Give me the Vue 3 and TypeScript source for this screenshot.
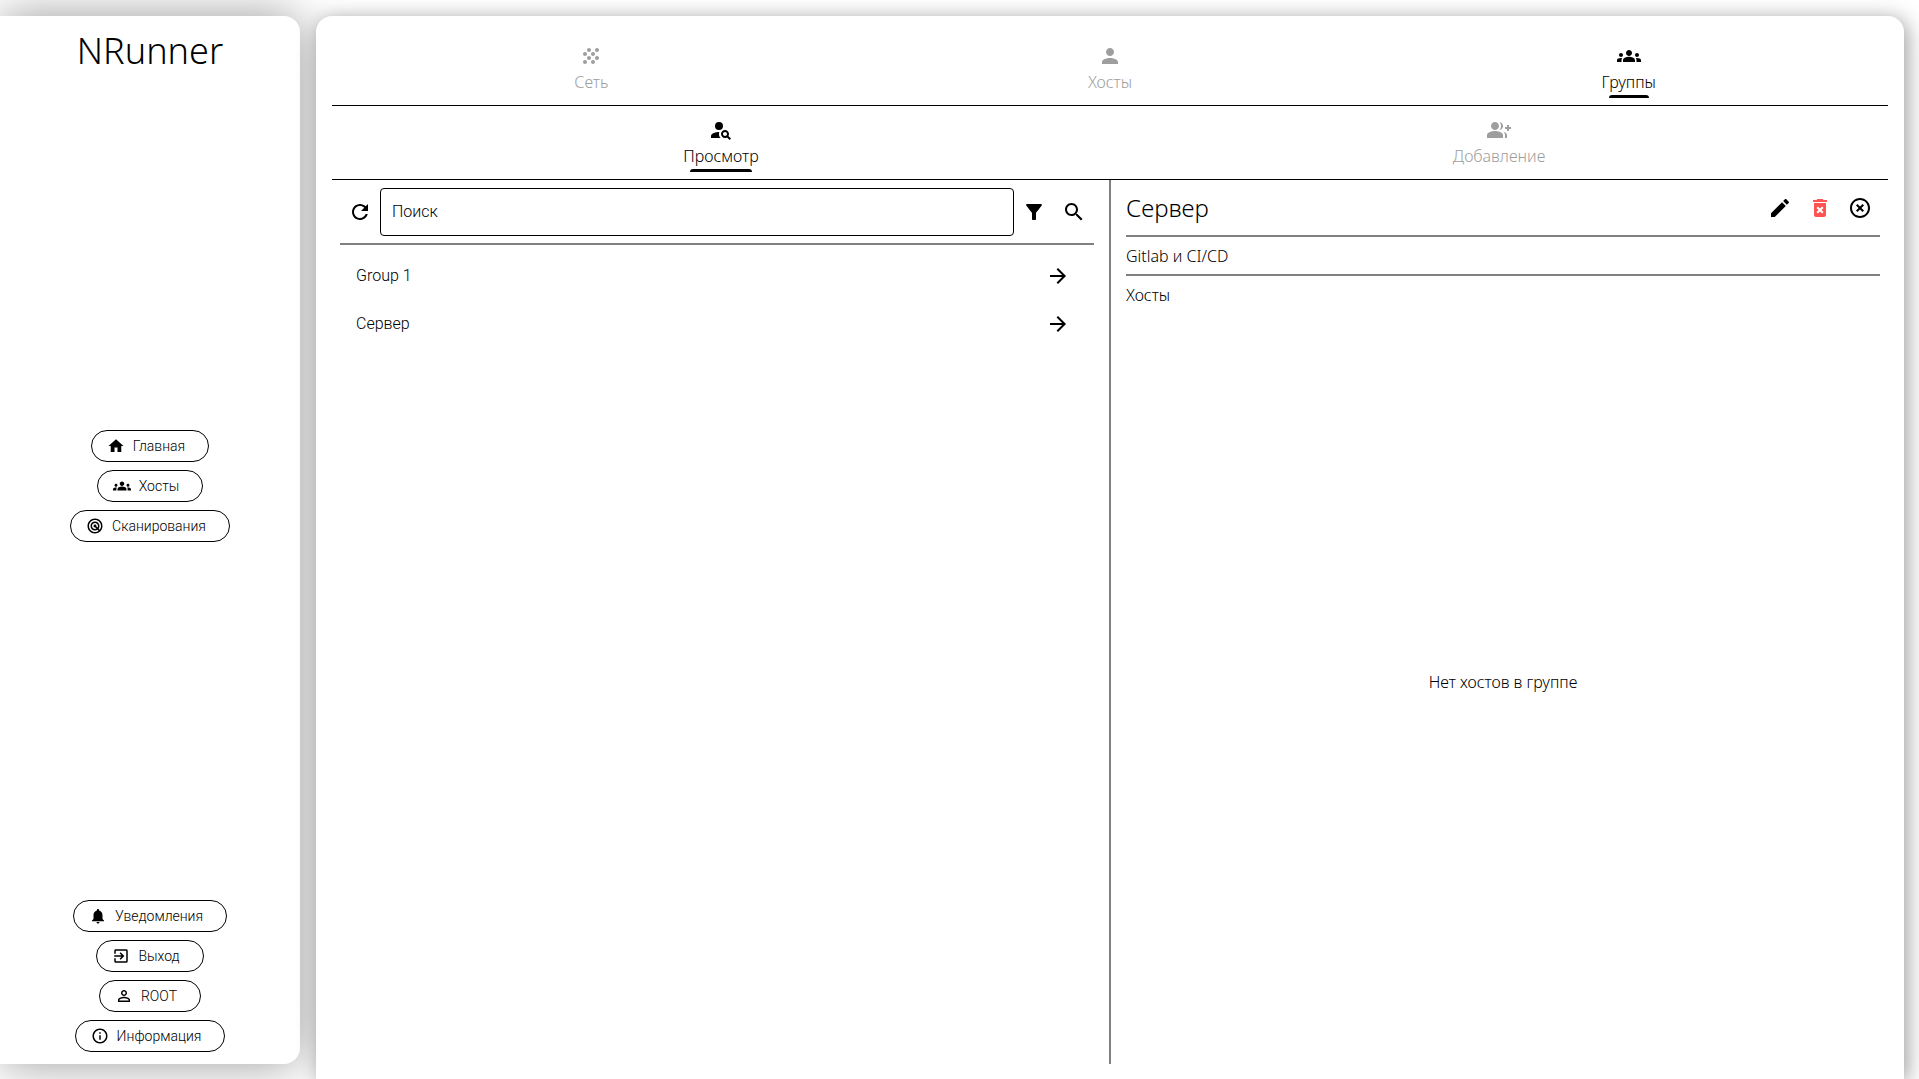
<script setup lang="ts">
import { computed, ref } from 'vue'

interface Item {
  id: string
  label: string
  icon: string
}

interface Group {
  name: string
  description: string
  hosts: string[]
}

const icons: Record<string, string> = {
  home: 'M10 20v-6h4v6h5v-8h3L12 3 2 12h3v8z',
  groups:
    'M12 12.75c1.63 0 3.07.39 4.24.9 1.08.48 1.76 1.56 1.76 2.73V18H6v-1.61c0-1.18.68-2.26 1.76-2.73 1.17-.52 2.61-.91 4.24-.91zM4 13c1.1 0 2-.9 2-2s-.9-2-2-2-2 .9-2 2 .9 2 2 2zm1.13 1.1c-.37-.06-.74-.1-1.13-.1-.99 0-1.93.21-2.78.58C.48 14.9 0 15.62 0 16.43V18h4.5v-1.61c0-.83.23-1.61.63-2.29zM20 13c1.1 0 2-.9 2-2s-.9-2-2-2-2 .9-2 2 .9 2 2 2zm4 3.43c0-.81-.48-1.53-1.22-1.85-.85-.37-1.79-.58-2.78-.58-.39 0-.76.04-1.13.1.4.68.63 1.46.63 2.29V18H24v-1.57zM12 6c1.66 0 3 1.34 3 3s-1.34 3-3 3-3-1.34-3-3 1.34-3 3-3z',
  radar:
    'M19.74 18.33C21.15 16.6 22 14.4 22 12c0-5.52-4.48-10-10-10S2 6.48 2 12s4.48 10 10 10c2.4 0 4.6-.85 6.33-2.26.27-.22.53-.46.78-.71.03-.03.05-.06.07-.08.2-.2.39-.41.56-.62zM12 20c-4.41 0-8-3.59-8-8s3.59-8 8-8 8 3.59 8 8c0 1.85-.63 3.54-1.69 4.9l-1.43-1.43c.69-.98 1.1-2.17 1.1-3.46 0-3.31-2.69-6-6-6s-6 2.69-6 6 2.69 6 6 6c1.3 0 2.51-.42 3.49-1.13l1.42 1.42C15.54 19.37 13.85 20 12 20zm1.92-7.49c.17-.66.02-1.38-.49-1.9l-.02-.02c-.77-.77-2-.78-2.78-.04-.01.01-.03.02-.05.04-.78.78-.78 2.05 0 2.83l.02.02c.52.51 1.25.67 1.91.49l1.51 1.51c-.6.36-1.29.58-2.04.58-2.21 0-4-1.79-4-4s1.79-4 4-4 4 1.79 4 4c0 .73-.21 1.41-.56 2l-1.5-1.51z',
  bell:
    'M12 22c1.1 0 2-.9 2-2h-4c0 1.1.89 2 2 2zm6-6v-5c0-3.07-1.64-5.64-4.5-6.32V4c0-.83-.67-1.5-1.5-1.5s-1.5.67-1.5 1.5v.68C7.63 5.36 6 7.92 6 11v5l-2 2v1h16v-1l-2-2z',
  exit:
    'M10.09 15.59L11.5 17l5-5-5-5-1.41 1.41L12.67 11H3v2h9.67l-2.58 2.59zM19 3H5c-1.11 0-2 .9-2 2v4h2V5h14v14H5v-4H3v4c0 1.1.89 2 2 2h14c1.1 0 2-.9 2-2V5c0-1.1-.9-2-2-2z',
  personOutline:
    'M12 5.9c1.16 0 2.1.94 2.1 2.1s-.94 2.1-2.1 2.1S9.9 9.16 9.9 8s.94-2.1 2.1-2.1m0 9c2.97 0 6.1 1.46 6.1 2.1v1.1H5.9V17c0-.64 3.13-2.1 6.1-2.1M12 4C9.79 4 8 5.79 8 8s1.79 4 4 4 4-1.79 4-4-1.79-4-4-4zm0 9c-2.67 0-8 1.34-8 4v3h16v-3c0-2.66-5.33-4-8-4z',
  info:
    'M11 7h2v2h-2zm0 4h2v6h-2zm1-9C6.48 2 2 6.48 2 12s4.48 10 10 10 10-4.48 10-10S17.52 2 12 2zm0 18c-4.41 0-8-3.59-8-8s3.59-8 8-8 8 3.59 8 8-3.59 8-8 8z',
  grain:
    'M10 12c-1.1 0-2 .9-2 2s.9 2 2 2 2-.9 2-2-.9-2-2-2zM6 8c-1.1 0-2 .9-2 2s.9 2 2 2 2-.9 2-2-.9-2-2-2zm0 8c-1.1 0-2 .9-2 2s.9 2 2 2 2-.9 2-2-.9-2-2-2zm12-8c1.1 0 2-.9 2-2s-.9-2-2-2-2 .9-2 2 .9 2 2 2zm-4 8c-1.1 0-2 .9-2 2s.9 2 2 2 2-.9 2-2-.9-2-2-2zm4-4c-1.1 0-2 .9-2 2s.9 2 2 2 2-.9 2-2-.9-2-2-2zm-4-4c-1.1 0-2 .9-2 2s.9 2 2 2 2-.9 2-2-.9-2-2-2zm-4-4c-1.1 0-2 .9-2 2s.9 2 2 2 2-.9 2-2-.9-2-2-2z',
  person:
    'M12 12c2.21 0 4-1.79 4-4s-1.79-4-4-4-4 1.79-4 4 1.79 4 4 4zm0 2c-2.67 0-8 1.34-8 4v2h16v-2c0-2.66-5.33-4-8-4z',
  personSearch:
    'M10 4a4 4 0 1 0 0 8 4 4 0 0 0 0-8zM10.35 14.01C7.62 13.91 2 15.27 2 18v2h9.54c-2.47-2.76-1.23-5.89-1.19-5.99zM19.43 18.02c.36-.59.57-1.28.57-2.02 0-2.21-1.79-4-4-4s-4 1.79-4 4 1.79 4 4 4c.74 0 1.43-.22 2.02-.57L20.59 22 22 20.59l-2.57-2.57zM16 18c-1.1 0-2-.9-2-2s.9-2 2-2 2 .9 2 2-.9 2-2 2z',
  groupAdd:
    'M22 9V7h-2v2h-2v2h2v2h2v-2h2V9zM8 12c2.21 0 4-1.79 4-4s-1.79-4-4-4-4 1.79-4 4 1.79 4 4 4zm0 1c-2.67 0-8 1.34-8 4v3h16v-3c0-2.66-5.33-4-8-4zM12.51 4.05C13.43 5.11 14 6.49 14 8s-.57 2.89-1.49 3.95C14.47 11.7 16 10.04 16 8s-1.53-3.7-3.49-3.95zM16.53 13.83C17.42 14.66 18 15.7 18 17v3h2v-3c0-1.45-1.59-2.51-3.47-3.17z',
  refresh:
    'M17.65 6.35C16.2 4.9 14.21 4 12 4c-4.42 0-7.99 3.58-7.99 8s3.57 8 7.99 8c3.73 0 6.84-2.55 7.73-6h-2.08c-.82 2.33-3.04 4-5.65 4-3.31 0-6-2.69-6-6s2.69-6 6-6c1.66 0 3.14.69 4.22 1.78L13 11h7V4l-2.35 2.35z',
  filter:
    'M4.25 5.61C6.27 8.2 10 13 10 13v6c0 .55.45 1 1 1h2c.55 0 1-.45 1-1v-6s3.72-4.8 5.74-7.39c.51-.66.04-1.61-.79-1.61H5.04c-.83 0-1.3.95-.79 1.61z',
  search:
    'M15.5 14h-.79l-.28-.27C15.41 12.59 16 11.11 16 9.5 16 5.91 13.09 3 9.5 3S3 5.91 3 9.5 5.91 16 9.5 16c1.61 0 3.09-.59 4.23-1.57l.27.28v.79l5 4.99L20.49 19l-4.99-5zm-6 0C7.01 14 5 11.99 5 9.5S7.01 5 9.5 5 14 7.01 14 9.5 11.99 14 9.5 14z',
  arrow: 'M12 4l-1.41 1.41L16.17 11H4v2h12.17l-5.58 5.59L12 20l8-8z',
  edit:
    'M3 17.25V21h3.75L17.81 9.94l-3.75-3.75L3 17.25zM20.71 7.04c.39-.39.39-1.02 0-1.41l-2.34-2.34c-.39-.39-1.02-.39-1.41 0l-1.83 1.83 3.75 3.75 1.83-1.83z',
  remove:
    'M6 19c0 1.1.9 2 2 2h8c1.1 0 2-.9 2-2V7H6v12zm2.46-7.12l1.41-1.41L12 12.59l2.12-2.12 1.41 1.41L13.41 14l2.12 2.12-1.41 1.41L12 15.41l-2.12 2.12-1.41-1.41L10.59 14l-2.13-2.12zM15.5 4l-1-1h-5l-1 1H5v2h14V4z',
  close:
    'M14.59 8L12 10.59 9.41 8 8 9.41 10.59 12 8 14.59 9.41 16 12 13.41 14.59 16 16 14.59 13.41 12 16 9.41 14.59 8zM12 2C6.47 2 2 6.47 2 12s4.47 10 10 10 10-4.47 10-10S17.53 2 12 2zm0 18c-4.41 0-8-3.59-8-8s3.59-8 8-8 8 3.59 8 8-3.59 8-8 8z',
}

const pages: Item[] = [
  { id: 'home', label: 'Главная', icon: 'home' },
  { id: 'hosts', label: 'Хосты', icon: 'groups' },
  { id: 'scans', label: 'Сканирования', icon: 'radar' },
]

const account: Item[] = [
  { id: 'notifications', label: 'Уведомления', icon: 'bell' },
  { id: 'logout', label: 'Выход', icon: 'exit' },
  { id: 'user', label: 'ROOT', icon: 'personOutline' },
  { id: 'about', label: 'Информация', icon: 'info' },
]

const sections: Item[] = [
  { id: 'network', label: 'Сеть', icon: 'grain' },
  { id: 'hosts', label: 'Хосты', icon: 'person' },
  { id: 'groups', label: 'Группы', icon: 'groups' },
]

const modes: Item[] = [
  { id: 'view', label: 'Просмотр', icon: 'personSearch' },
  { id: 'add', label: 'Добавление', icon: 'groupAdd' },
]

const groups: Group[] = [
  { name: 'Group 1', description: '', hosts: [] },
  { name: 'Сервер', description: 'Gitlab и CI/CD', hosts: [] },
]

const section = ref('groups')
const mode = ref('view')
const query = ref('')
const selected = ref<Group | null>(groups[1])

const visibleGroups = computed(() =>
  groups.filter((g) => g.name.toLowerCase().includes(query.value.toLowerCase())),
)
</script>

<template>
  <div class="app">
    <aside class="sidebar">
      <h1 class="brand">NRunner</h1>
      <nav class="menu">
        <button v-for="p in pages" :key="p.id" type="button" class="pill">
          <svg viewBox="0 0 24 24" aria-hidden="true"><path :d="icons[p.icon]" /></svg>
          <span>{{ p.label }}</span>
        </button>
      </nav>
      <div class="menu">
        <button v-for="a in account" :key="a.id" type="button" class="pill">
          <svg viewBox="0 0 24 24" aria-hidden="true"><path :d="icons[a.icon]" /></svg>
          <span>{{ a.label }}</span>
        </button>
      </div>
    </aside>

    <main class="card">
      <div class="tabs" role="tablist">
        <button
          v-for="s in sections"
          :key="s.id"
          type="button"
          role="tab"
          class="tab"
          :class="{ active: section === s.id }"
          :aria-selected="section === s.id"
          @click="section = s.id"
        >
          <svg viewBox="0 0 24 24" aria-hidden="true"><path :d="icons[s.icon]" /></svg>
          <span class="tab-label">{{ s.label }}</span>
        </button>
      </div>
      <div class="tabs" role="tablist">
        <button
          v-for="m in modes"
          :key="m.id"
          type="button"
          role="tab"
          class="tab"
          :class="{ active: mode === m.id }"
          :aria-selected="mode === m.id"
          @click="mode = m.id"
        >
          <svg viewBox="0 0 24 24" aria-hidden="true"><path :d="icons[m.icon]" /></svg>
          <span class="tab-label">{{ m.label }}</span>
        </button>
      </div>

      <div class="panes">
        <section class="pane">
          <div class="search">
            <button type="button" class="icon-button" aria-label="Обновить">
              <svg viewBox="0 0 24 24"><path :d="icons.refresh" /></svg>
            </button>
            <input v-model="query" class="search-input" type="text" placeholder="Поиск" aria-label="Поиск" />
            <button type="button" class="icon-button" aria-label="Фильтр">
              <svg viewBox="0 0 24 24"><path :d="icons.filter" /></svg>
            </button>
            <button type="button" class="icon-button" aria-label="Найти">
              <svg viewBox="0 0 24 24"><path :d="icons.search" /></svg>
            </button>
          </div>
          <hr class="rule" />
          <ul class="list">
            <li v-for="g in visibleGroups" :key="g.name">
              <button type="button" class="list-item" @click="selected = g">
                <span>{{ g.name }}</span>
                <svg viewBox="0 0 24 24" aria-hidden="true"><path :d="icons.arrow" /></svg>
              </button>
            </li>
          </ul>
        </section>

        <div class="divider"></div>

        <section v-if="selected" class="pane">
          <header class="detail-head">
            <h2 class="detail-title">{{ selected.name }}</h2>
            <button type="button" class="icon-button" aria-label="Изменить">
              <svg viewBox="0 0 24 24"><path :d="icons.edit" /></svg>
            </button>
            <button type="button" class="icon-button danger" aria-label="Удалить">
              <svg viewBox="0 0 24 24"><path :d="icons.remove" /></svg>
            </button>
            <button type="button" class="icon-button" aria-label="Закрыть" @click="selected = null">
              <svg viewBox="0 0 24 24"><path :d="icons.close" /></svg>
            </button>
          </header>
          <hr class="rule" />
          <p class="line">{{ selected.description }}</p>
          <hr class="rule" />
          <h3 class="line">Хосты</h3>
          <p v-if="!selected.hosts.length" class="empty">Нет хостов в группе</p>
        </section>
      </div>
    </main>
  </div>
</template>

<style>
body {
  margin: 0;
  background: #fff;
}
</style>

<style scoped>
.app {
  box-sizing: border-box;
  display: flex;
  gap: 16px;
  height: 100vh;
  padding: 16px 15px 0 0;
  overflow: hidden;
  color: #000;
  font-family: 'Noto Sans', 'Open Sans', sans-serif;
  font-size: 16px;
  font-weight: 350;
}

button {
  border: 0;
  padding: 0;
  background: none;
  color: inherit;
  font: inherit;
  cursor: pointer;
}

svg {
  display: block;
  flex: none;
  width: 24px;
  height: 24px;
  fill: currentColor;
}

h1,
h2,
h3,
p,
ul {
  margin: 0;
  padding: 0;
  font-weight: inherit;
}

.sidebar {
  box-sizing: border-box;
  display: flex;
  flex: none;
  flex-direction: column;
  align-items: center;
  justify-content: space-between;
  width: 300px;
  margin-bottom: 15px;
  padding: 12px;
  border-radius: 0 16px 16px 0;
  background: #fff;
  box-shadow: 0 0 48px rgba(0, 0, 0, 0.4);
}

.brand {
  height: 44px;
  font-size: 36px;
  line-height: 46px;
}

.menu {
  display: flex;
  flex-direction: column;
  align-items: center;
  gap: 8px;
}

.pill {
  box-sizing: border-box;
  display: flex;
  align-items: center;
  gap: 8px;
  height: 32px;
  padding: 0 23px 0 15px;
  border: 1px solid #000;
  border-radius: 16px;
  font-family: Roboto, sans-serif;
  font-size: 14px;
  line-height: 20px;
}

.pill svg {
  width: 18px;
  height: 18px;
}

.card {
  box-sizing: border-box;
  display: flex;
  flex: 1;
  flex-direction: column;
  min-width: 0;
  padding: 16px 16px 15px;
  border-radius: 16px 16px 0 0;
  background: #fff;
  box-shadow: 3px 3px 21px rgba(0, 0, 0, 0.4);
}

.tabs {
  display: flex;
  flex: none;
  border-bottom: 1px solid #000;
}

.tab {
  display: flex;
  flex: 1;
  flex-direction: column;
  align-items: center;
  height: 73px;
  padding-top: 12px;
  box-sizing: border-box;
  color: #9e9e9e;
}

.tab.active {
  color: #000;
}

.tab-label {
  position: relative;
  height: 30px;
  padding-top: 2px;
  box-sizing: border-box;
  line-height: 24px;
}

.tab.active .tab-label::after {
  content: '';
  position: absolute;
  right: 7px;
  bottom: 0;
  left: 7px;
  height: 3px;
  border-radius: 3px 3px 0 0;
  background: #000;
}

.panes {
  display: flex;
  flex: 1;
  min-height: 0;
}

.pane {
  display: flex;
  flex: 1 1 0;
  flex-direction: column;
  min-width: 0;
  padding: 8px;
}

.divider {
  flex: none;
  width: 2px;
  margin: 0 7px;
  background: #808080;
}

.rule {
  flex: none;
  width: 100%;
  height: 2px;
  margin: 7px 0;
  border: 0;
  background: #808080;
}

.search {
  display: flex;
  align-items: center;
}

.search-input {
  box-sizing: border-box;
  flex: 1;
  min-width: 0;
  height: 48px;
  padding: 0 11px 2px;
  border: 1px solid #000;
  border-radius: 4px;
  background: none;
  color: #000;
  font-family: Roboto, sans-serif;
  font-size: 16px;
  font-weight: inherit;
}

.search-input::placeholder {
  color: #000;
  opacity: 1;
}

.icon-button {
  display: flex;
  flex: none;
  align-items: center;
  justify-content: center;
  width: 40px;
  height: 40px;
}

.danger {
  color: #ff5252;
}

.list {
  list-style: none;
}

.list-item {
  box-sizing: border-box;
  display: flex;
  align-items: center;
  justify-content: space-between;
  width: 100%;
  height: 48px;
  padding: 0 24px 0 16px;
  font-family: Roboto, sans-serif;
}

.list-item span {
  padding-bottom: 2px;
}

.detail-head {
  display: flex;
  align-items: center;
}

.detail-title {
  flex: 1;
  font-size: 24px;
  line-height: 28px;
}

.line {
  height: 23px;
  font-size: 16px;
  line-height: 25px;
}

.empty {
  display: flex;
  flex: 1;
  align-items: center;
  justify-content: center;
  padding-top: 2px;
}
</style>
